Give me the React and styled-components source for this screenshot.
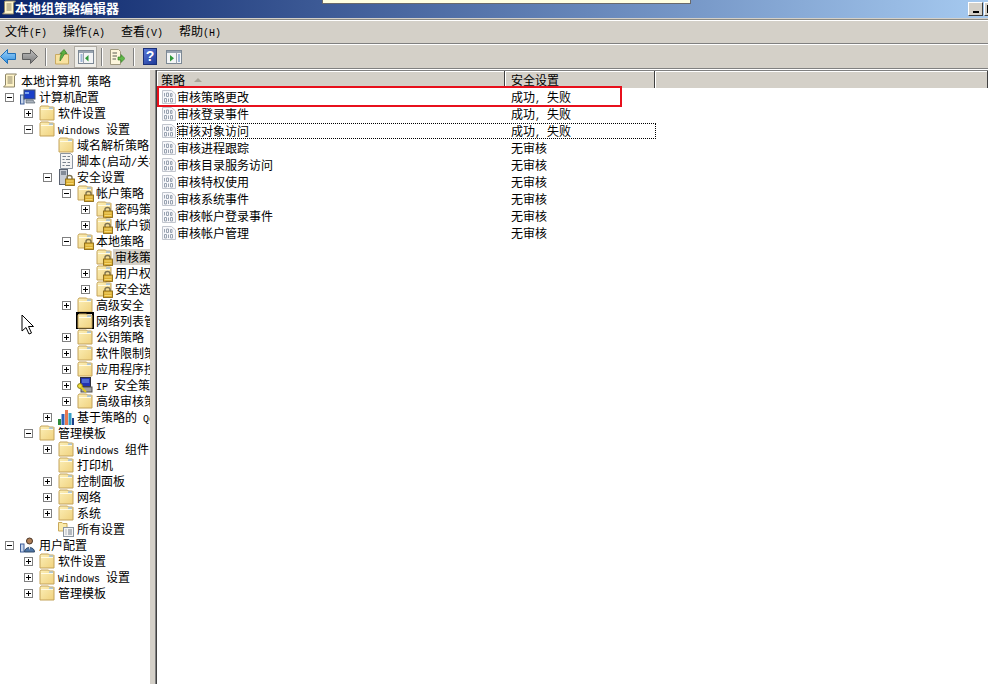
import React from "react";
import styled, { createGlobalStyle } from "styled-components";

const GlobalStyle = createGlobalStyle`
    html, body {
        margin: 0;
        padding: 0;
        background: #d4d0c8;
        overflow: hidden;
    }
    * {
        box-sizing: border-box;
    }
`;

const CJK = `"Noto Sans CJK SC", sans-serif`;

// ascii is narrower in the original bitmap font, 6px a char
const Txt = ({ children }) => {
    const parts = children.split(/([\x20-\x7e]+)/).filter(Boolean);
    return parts.map((part, i) =>
        /^[\x20-\x7e]+$/.test(part) ? <Latin key={i}>{part}</Latin> : <span key={i}>{part}</span>
    );
};

const LockShape = () => (
    <g>
        <path d="M9 10V8.5C9 5.8 14 5.8 14 8.5V10" fill="none" stroke="#7d7350" strokeWidth="1.4" />
        <rect x="7.5" y="10" width="9" height="6.5" fill="#dcae32" stroke="#8a6a18" strokeWidth="0.9" />
        <path d="M8.5 12H15.5M8.5 14.5H15.5" stroke="#f4d873" />
    </g>
);

const FolderIcon = ({ lock, framed }) => (
    <IconSvg viewBox="0 0 16 16">
        <defs>
            <linearGradient id="folderFill" x1="0" y1="0" x2="1" y2="1">
                <stop offset="0" stopColor="#fcefb8" />
                <stop offset="1" stopColor="#f0d27e" />
            </linearGradient>
        </defs>
        {framed && <rect x="0" y="0" width="16" height="15" fill="none" stroke="#000" strokeWidth="2" />}
        <path d="M1 15V2.5L2 1H9.5L10.5 2H14.5L15 2.5V15Z" fill="url(#folderFill)" stroke="#c4a35a" />
        <path d="M2 4.5H14" stroke="#fffbe4" />
        <path d="M10 2.5H14V3.8H10Z" fill="#9cc0e6" />
        {lock && <LockShape />}
    </IconSvg>
);

const ComputerIcon = () => (
    <IconSvg viewBox="0 0 16 16">
        <rect x="0.5" y="6" width="3.5" height="9" fill="#c6d4ea" stroke="#3f5f9a" />
        <rect x="4" y="1" width="11" height="9" fill="#1a3fc8" stroke="#44526a" />
        <path d="M5 3H9V5H5Z" fill="#7aa2f0" />
        <path d="M6 11H13L15 14H6Z" fill="#aab2bc" stroke="#5a6470" strokeWidth="0.7" />
    </IconSvg>
);

const UserIcon = () => (
    <IconSvg viewBox="0 0 16 16">
        <rect x="0.5" y="7" width="3.5" height="8" fill="#c6d4ea" stroke="#3f5f9a" />
        <circle cx="9.5" cy="4" r="3" fill="#b08058" stroke="#4a3424" />
        <path d="M4.5 15C4.5 9 14.5 9 14.5 15Z" fill="#4e76a6" stroke="#2f4868" />
        <path d="M8.5 9L9.5 13L10.5 9Z" fill="#e8e8e8" />
    </IconSvg>
);

const ScrollIcon = () => (
    <IconSvg viewBox="0 0 16 16">
        <path d="M4 1H14.5L12.5 3V14H1.5L3.5 12V2Z" fill="#fff4c8" stroke="#8c8468" />
        <path d="M5.5 4H10.5M5.5 6H10.5M5.5 8H10.5M5.5 10H10.5" stroke="#8c8468" />
    </IconSvg>
);

const ScriptIcon = () => (
    <IconSvg viewBox="0 0 16 16">
        <path d="M2.5 0.5H12.5L14.5 2.5V15.5H2.5Z" fill="#f4f4f4" stroke="#8a94a0" />
        <path d="M4.5 3.5H8M9.5 3.5H12M4.5 6.5H6.5M8 6.5H12M4.5 9.5H8M9.5 9.5H12M4.5 12.5H6.5M8 12.5H12" stroke="#77808c" />
    </IconSvg>
);

const ServerLockIcon = () => (
    <IconSvg viewBox="0 0 16 16">
        <rect x="1.5" y="0.5" width="8" height="15" fill="#c8ccd4" stroke="#5a6270" />
        <path d="M3 3H8M3 5H8" stroke="#3f4a5a" />
        <LockShape />
    </IconSvg>
);

const ChartIcon = () => (
    <IconSvg viewBox="0 0 16 16">
        <rect x="0" y="10" width="3" height="6" fill="#2c8a3a" />
        <rect x="3.5" y="5" width="3" height="11" fill="#2a62b8" />
        <rect x="7" y="1" width="3" height="15" fill="#e87850" />
        <rect x="10.5" y="4" width="3" height="12" fill="#37a0c8" />
        <rect x="14" y="9" width="2" height="7" fill="#1d3f88" />
    </IconSvg>
);

const IpIcon = () => (
    <IconSvg viewBox="0 0 16 16">
        <rect x="3.5" y="0.5" width="10" height="9" fill="#2233b0" stroke="#30303a" />
        <path d="M5 3H12M5 5H12" stroke="#7aa2f0" />
        <rect x="4" y="10" width="11" height="5" fill="#a0a0a0" stroke="#505050" />
        <circle cx="3" cy="9" r="2.4" fill="#f0e040" stroke="#8c7a10" />
        <path d="M4 10L9 15" stroke="#e0c820" strokeWidth="2" />
    </IconSvg>
);

const AllSettingsIcon = () => (
    <IconSvg viewBox="0 0 16 16">
        <path d="M0.5 10V1.5H4L5 2.5H9V10Z" fill="#fbeaa8" stroke="#c8a85c" />
        <rect x="5.5" y="6.5" width="10" height="9" fill="#f4f4f4" stroke="#8a94a0" />
        <path d="M7.5 9H8.5M10 9H14M7.5 11H8.5M10 11H14M7.5 13H8.5M10 13H14" stroke="#77808c" />
    </IconSvg>
);

// pale page with binary digits on it
const PolicyIcon = () => (
    <svg width="14" height="14" viewBox="0 0 14 14">
        <path d="M0.5 0.5H9.5L13.5 4V13.5H0.5Z" fill="#f7f7fa" stroke="#c2c6ce" />
        <path
            d="M2.5 3V6.5M4.5 3H6.5V6.5H4.5ZM8.5 3.5H10V6.5H8.5ZM2.5 8.5H4.5V12H2.5ZM6.5 8.5V12M8.5 8.5H10.5V12H8.5Z"
            fill="none"
            stroke="#98a2b0"
        />
    </svg>
);

const ICONS = {
    folder: <FolderIcon />,
    lock: <FolderIcon lock />,
    framed: <FolderIcon framed />,
    computer: <ComputerIcon />,
    user: <UserIcon />,
    scroll: <ScrollIcon />,
    script: <ScriptIcon />,
    server: <ServerLockIcon />,
    chart: <ChartIcon />,
    ip: <IpIcon />,
    all: <AllSettingsIcon />,
};

const treeItems = [
    { depth: 0, icon: "scroll", label: "本地计算机 策略" },
    { depth: 1, box: "-", icon: "computer", label: "计算机配置" },
    { depth: 2, box: "+", icon: "folder", label: "软件设置" },
    { depth: 2, box: "-", icon: "folder", label: "Windows 设置" },
    { depth: 3, icon: "folder", label: "域名解析策略" },
    { depth: 3, icon: "script", label: "脚本(启动/关机)" },
    { depth: 3, box: "-", icon: "server", label: "安全设置" },
    { depth: 4, box: "-", icon: "lock", label: "帐户策略" },
    { depth: 5, box: "+", icon: "lock", label: "密码策略" },
    { depth: 5, box: "+", icon: "lock", label: "帐户锁定策略" },
    { depth: 4, box: "-", icon: "lock", label: "本地策略" },
    { depth: 5, icon: "lock", label: "审核策略", selected: true },
    { depth: 5, box: "+", icon: "lock", label: "用户权限分配" },
    { depth: 5, box: "+", icon: "lock", label: "安全选项" },
    { depth: 4, box: "+", icon: "folder", label: "高级安全 Windows" },
    { depth: 4, icon: "framed", label: "网络列表管理器" },
    { depth: 4, box: "+", icon: "folder", label: "公钥策略" },
    { depth: 4, box: "+", icon: "folder", label: "软件限制策略" },
    { depth: 4, box: "+", icon: "folder", label: "应用程序控制" },
    { depth: 4, box: "+", icon: "ip", label: "IP 安全策略" },
    { depth: 4, box: "+", icon: "folder", label: "高级审核策略" },
    { depth: 3, box: "+", icon: "chart", label: "基于策略的 QoS" },
    { depth: 2, box: "-", icon: "folder", label: "管理模板" },
    { depth: 3, box: "+", icon: "folder", label: "Windows 组件" },
    { depth: 3, icon: "folder", label: "打印机" },
    { depth: 3, box: "+", icon: "folder", label: "控制面板" },
    { depth: 3, box: "+", icon: "folder", label: "网络" },
    { depth: 3, box: "+", icon: "folder", label: "系统" },
    { depth: 3, icon: "all", label: "所有设置" },
    { depth: 1, box: "-", icon: "user", label: "用户配置" },
    { depth: 2, box: "+", icon: "folder", label: "软件设置" },
    { depth: 2, box: "+", icon: "folder", label: "Windows 设置" },
    { depth: 2, box: "+", icon: "folder", label: "管理模板" },
];

const policies = [
    { name: "审核策略更改", value: "成功, 失败" },
    { name: "审核登录事件", value: "成功, 失败" },
    { name: "审核对象访问", value: "成功, 失败", focused: true },
    { name: "审核进程跟踪", value: "无审核" },
    { name: "审核目录服务访问", value: "无审核" },
    { name: "审核特权使用", value: "无审核" },
    { name: "审核系统事件", value: "无审核" },
    { name: "审核帐户登录事件", value: "无审核" },
    { name: "审核帐户管理", value: "无审核" },
];

const menus = [
    ["文件", "(F)"],
    ["操作", "(A)"],
    ["查看", "(V)"],
    ["帮助", "(H)"],
];

const PaneGlyph = ({ $arrow }) => (
    <svg width="16" height="14" viewBox="0 0 16 14">
        <rect x="0.5" y="0.5" width="15" height="13" fill="#f4f5f6" stroke="#7c8894" />
        <rect x="1" y="1" width="14" height="2" fill="#98a4b0" />
        {$arrow === "left" ? (
            <g>
                <path d="M5.5 3V13.5" stroke="#9aa4ae" />
                <path d="M2.5 5H4.5M2.5 7H4.5M2.5 9H4.5M2.5 11H4.5" stroke="#4a78b8" />
                <path d="M10.5 5V11.5L7 8.2Z" fill="#2f9a3a" />
            </g>
        ) : (
            <g>
                <path d="M10.5 3V13.5" stroke="#9aa4ae" />
                <path d="M12 5H14M12 7H14M12 9H14M12 11H14" stroke="#4a78b8" />
                <path d="M4 5V11.5L8 8.2Z" fill="#2f9a3a" />
            </g>
        )}
    </svg>
);

const App = () => (
    <Page>
        <GlobalStyle />
        <TitleBar>
            <TitleIcon><ScrollIcon /></TitleIcon>
            <TitleText>本地组策略编辑器</TitleText>
            <WinButton>
                <MinGlyph />
            </WinButton>
            <WinButton>
                <MaxGlyph />
            </WinButton>
        </TitleBar>
        <Balloon />
        <MenuBar>
            {menus.map(([name, key]) => (
                <MenuItem key={name}>
                    {name}
                    <Latin>{key}</Latin>
                </MenuItem>
            ))}
        </MenuBar>
        <Toolbar>
            <ToolButton>
                <svg width="16" height="15" viewBox="0 0 16 15">
                    <defs>
                        <linearGradient id="backFill" x1="0" y1="0" x2="0" y2="1">
                            <stop offset="0" stopColor="#9ed2f8" />
                            <stop offset="1" stopColor="#2f8ee0" />
                        </linearGradient>
                    </defs>
                    <path d="M0.5 7.5L7.5 0.5V4.5H15.5V10.5H7.5V14.5Z" fill="url(#backFill)" stroke="#1f6fb8" />
                </svg>
            </ToolButton>
            <ToolButton $gap={6}>
                <svg width="16" height="15" viewBox="0 0 16 15">
                    <defs>
                        <linearGradient id="fwdFill" x1="0" y1="0" x2="0" y2="1">
                            <stop offset="0" stopColor="#c0c0c0" />
                            <stop offset="1" stopColor="#7a7a7a" />
                        </linearGradient>
                    </defs>
                    <path d="M15.5 7.5L8.5 0.5V4.5H0.5V10.5H8.5V14.5Z" fill="url(#fwdFill)" stroke="#5e5e5e" />
                </svg>
            </ToolButton>
            <ToolSep $gap={7} />
            <ToolButton $gap={7}>
                <svg width="16" height="16" viewBox="0 0 16 16">
                    <path d="M1.5 15V5.5H14.5V15Z" fill="#f8e2a0" stroke="#c9aa62" />
                    <path d="M6 12C6 8 6.5 6 8 4.5H6L10 0.5L13 4.5H11C9.5 6 9 8 6 12Z" fill="#5cb040" stroke="#2f7a20" strokeWidth="0.7" />
                </svg>
            </ToolButton>
            <ToolButton $gap={4} $wide $active>
                <PaneGlyph $arrow="left" />
            </ToolButton>
            <ToolSep $gap={4} />
            <ToolButton $gap={6}>
                <svg width="16" height="16" viewBox="0 0 16 16">
                    <path d="M1.5 0.5H9.5L11.5 2.5V15.5H1.5Z" fill="#fdf6dc" stroke="#a09a80" />
                    <path d="M3.5 4H8M3.5 7H8M3.5 10H7" stroke="#5a5a50" />
                    <path d="M9 8H12V5.5L16 9.5L12 13.5V11H9Z" fill="#60b848" stroke="#2f7a20" strokeWidth="0.6" />
                </svg>
            </ToolButton>
            <ToolSep $gap={8} />
            <ToolButton $gap={7}>
                <HelpBox>?</HelpBox>
            </ToolButton>
            <ToolButton $gap={8}>
                <PaneGlyph $arrow="right" />
            </ToolButton>
        </Toolbar>
        <Panes>
            <TreePane>
                {treeItems.map((item, i) => (
                    <TreeRow key={i} $depth={item.depth}>
                        {item.depth > 0 && (
                            <BoxSlot>{item.box && <Expander $open={item.box === "-"} />}</BoxSlot>
                        )}
                        <IconSlot>{ICONS[item.icon]}</IconSlot>
                        <TreeLabel $selected={item.selected}>
                            <Txt>{item.label}</Txt>
                        </TreeLabel>
                    </TreeRow>
                ))}
            </TreePane>
            <Splitter />
            <ListPane>
                <ListHeader>
                    <HeaderCell $width={348} $first>
                        <Txt>策略</Txt>
                        <SortArrow />
                    </HeaderCell>
                    <HeaderCell $width={150}>
                        <Txt>安全设置</Txt>
                    </HeaderCell>
                    <HeaderCell $grow />
                </ListHeader>
                {policies.map((policy) => (
                    <ListRow key={policy.name}>
                        <PolicyIconSlot>
                            <PolicyIcon />
                        </PolicyIconSlot>
                        <RowCells $focused={policy.focused}>
                            <NameCell>{policy.name}</NameCell>
                            <ValueCell>
                                <Txt>{policy.value}</Txt>
                            </ValueCell>
                        </RowCells>
                    </ListRow>
                ))}
                <RedMark />
            </ListPane>
        </Panes>
        <Pointer>
            <svg width="14" height="21" viewBox="0 0 14 21">
                <path d="M1 1V17L5 13.5L8 20L10.5 19L7.5 12.5H12.5Z" fill="#fff" stroke="#000" />
            </svg>
        </Pointer>
    </Page>
);

export default App;

const Page = styled.div`
    position: relative;
    width: 988px;
    height: 684px;
    overflow: hidden;
    display: flex;
    flex-direction: column;
    background: #d4d0c8;
    font-family: ${CJK};
    font-size: 12px;
    line-height: 16px;
    color: #000;
`;

const Latin = styled.span`
    font-family: "Liberation Mono", monospace;
    font-size: 10px;
`;

const IconSvg = styled.svg`
    width: 16px;
    height: 16px;
    overflow: visible;
`;

const TitleBar = styled.div`
    height: 18px;
    flex: none;
    display: flex;
    align-items: flex-start;
    background: linear-gradient(90deg, #0a246a, #a6caf0);
    padding: 0 0 0 1px;
`;

const TitleIcon = styled.div`
    width: 14px;
    height: 16px;
    flex: none;
`;

const TitleText = styled.div`
    flex: 1;
    font-size: 13px;
    font-weight: 700;
    line-height: 16px;
    color: #fff;
`;

const WinButton = styled.div`
    width: 15px;
    height: 14px;
    margin: 2px 1px 0 0;
    flex: none;
    display: flex;
    align-items: flex-end;
    justify-content: center;
    padding-bottom: 2px;
    background: #d4d0c8;
    border: 1px solid;
    border-color: #fff #404040 #404040 #fff;
    &:last-child {
        margin-right: -11px;
    }
`;

const MinGlyph = styled.div`
    width: 6px;
    height: 2px;
    background: #000;
`;

const MaxGlyph = styled.div`
    width: 9px;
    height: 8px;
    border: 1px solid #000;
    border-top-width: 2px;
`;

const Balloon = styled.div`
    position: absolute;
    left: 322px;
    top: -1px;
    width: 369px;
    height: 5px;
    background: #ffffe1;
    border: 1px solid #6a6a6a;
`;

const MenuBar = styled.div`
    height: 25px;
    flex: none;
    display: flex;
    align-items: center;
    padding: 2px 0 0 5px;
    border-top: 1px solid #8a8a84;
    border-bottom: 1px solid #808080;
    box-shadow: inset 0 1px 0 #fff, 0 1px 0 #fff;
    margin-top: 1px;
`;

const MenuItem = styled.div`
    width: 58px;
    flex: none;
`;

const Toolbar = styled.div`
    height: 24px;
    margin-top: 1px;
    flex: none;
    display: flex;
    align-items: center;
    padding-left: 0;
    border-bottom: 1px solid #808080;
    box-shadow: 0 1px 0 #fff;
`;

const ToolButton = styled.div`
    width: ${(p) => (p.$wide ? "23px" : "16px")};
    height: ${(p) => (p.$wide ? "22px" : "16px")};
    margin-left: ${(p) => p.$gap ?? 0}px;
    flex: none;
    display: flex;
    align-items: center;
    justify-content: center;
    ${(p) =>
        p.$active &&
        `
        background: #efeee9;
        border: 1px solid;
        border-color: #f8f8f6 #fff #fff #f8f8f6;
        outline: 1px solid #b0aca4;
        outline-offset: -1px;
    `}
`;

const ToolSep = styled.div`
    width: 2px;
    height: 18px;
    margin-left: ${(p) => p.$gap}px;
    flex: none;
    border-left: 1px solid #808080;
    border-right: 1px solid #fff;
`;

const HelpBox = styled.div`
    width: 14px;
    height: 17px;
    background: linear-gradient(135deg, #5a78d8, #1e3a98);
    border: 1px solid #1a2f78;
    color: #fff;
    font-family: "Liberation Sans", sans-serif;
    font-size: 14px;
    font-weight: 700;
    line-height: 15px;
    text-align: center;
`;

const Panes = styled.div`
    flex: 1;
    min-height: 0;
    margin-top: 1px;
    display: flex;
`;

const TreePane = styled.div`
    width: 150px;
    flex: none;
    padding-top: 3px;
    overflow: hidden;
    background: #fff;
`;

const TreeRow = styled.div`
    height: 16px;
    display: flex;
    align-items: center;
    white-space: nowrap;
    padding-left: ${(p) => (p.$depth === 0 ? 2 : (p.$depth - 1) * 19)}px;
`;

const BoxSlot = styled.div`
    width: 20px;
    height: 16px;
    flex: none;
    display: flex;
    align-items: center;
    padding-left: 5px;
`;

const Expander = styled.div`
    position: relative;
    width: 9px;
    height: 9px;
    border: 1px solid #808080;
    background: #fff;
    &::before {
        content: "";
        position: absolute;
        left: 1px;
        top: 3px;
        width: 5px;
        height: 1px;
        background: #000;
    }
    &::after {
        content: "";
        display: ${(p) => (p.$open ? "none" : "block")};
        position: absolute;
        left: 3px;
        top: 1px;
        width: 1px;
        height: 5px;
        background: #000;
    }
`;

const IconSlot = styled.div`
    width: 16px;
    height: 16px;
    flex: none;
    display: flex;
`;

const TreeLabel = styled.div`
    margin-left: 1px;
    padding: 0 2px;
    height: 16px;
    background: ${(p) => (p.$selected ? "#d4d0c8" : "transparent")};
`;

const Splitter = styled.div`
    width: 5px;
    flex: none;
    background: #d4d0c8;
`;

const ListPane = styled.div`
    position: relative;
    flex: 1;
    min-width: 0;
    background: #fff;
    border-left: 1px solid #808080;
    box-shadow: inset 1px 0 0 #404040;
    padding-left: 1px;
    overflow: hidden;
`;

const ListHeader = styled.div`
    height: 18px;
    display: flex;
    background: #d4d0c8;
    overflow: hidden;
    border-top: 1px solid #808080;
    box-shadow: inset 0 1px 0 #fff;
`;

const HeaderCell = styled.div`
    width: ${(p) => (p.$grow ? "auto" : `${p.$width}px`)};
    flex: ${(p) => (p.$grow ? 1 : "none")};
    display: flex;
    align-items: flex-start;
    padding: 1px 0 0 ${(p) => (p.$first ? 3 : 5)}px;
    line-height: 16px;
    border-left: 1px solid #fff;
    border-right: 1px solid #404040;
`;

const SortArrow = styled.div`
    width: 0;
    height: 0;
    margin: 6px 0 0 9px;
    border-left: 4px solid transparent;
    border-right: 4px solid transparent;
    border-bottom: 4px solid #a8a498;
`;

const ListRow = styled.div`
    height: 17px;
    display: flex;
    align-items: center;
    padding-left: 5px;
`;

const PolicyIconSlot = styled.div`
    width: 14px;
    height: 14px;
    flex: none;
    display: flex;
`;

const RowCells = styled.div`
    width: 479px;
    height: 16px;
    margin-left: 1px;
    flex: none;
    display: flex;
    outline: ${(p) => (p.$focused ? "1px dotted #000" : "none")};
    outline-offset: -1px;
`;

const NameCell = styled.div`
    width: 334px;
    flex: none;
`;

const ValueCell = styled.div`
    flex: 1;
`;

const RedMark = styled.div`
    position: absolute;
    left: 1px;
    top: 16px;
    width: 465px;
    height: 21px;
    border: 2px solid #e8101c;
`;

const Pointer = styled.div`
    position: absolute;
    left: 21px;
    top: 314px;
    line-height: 0;
`;
